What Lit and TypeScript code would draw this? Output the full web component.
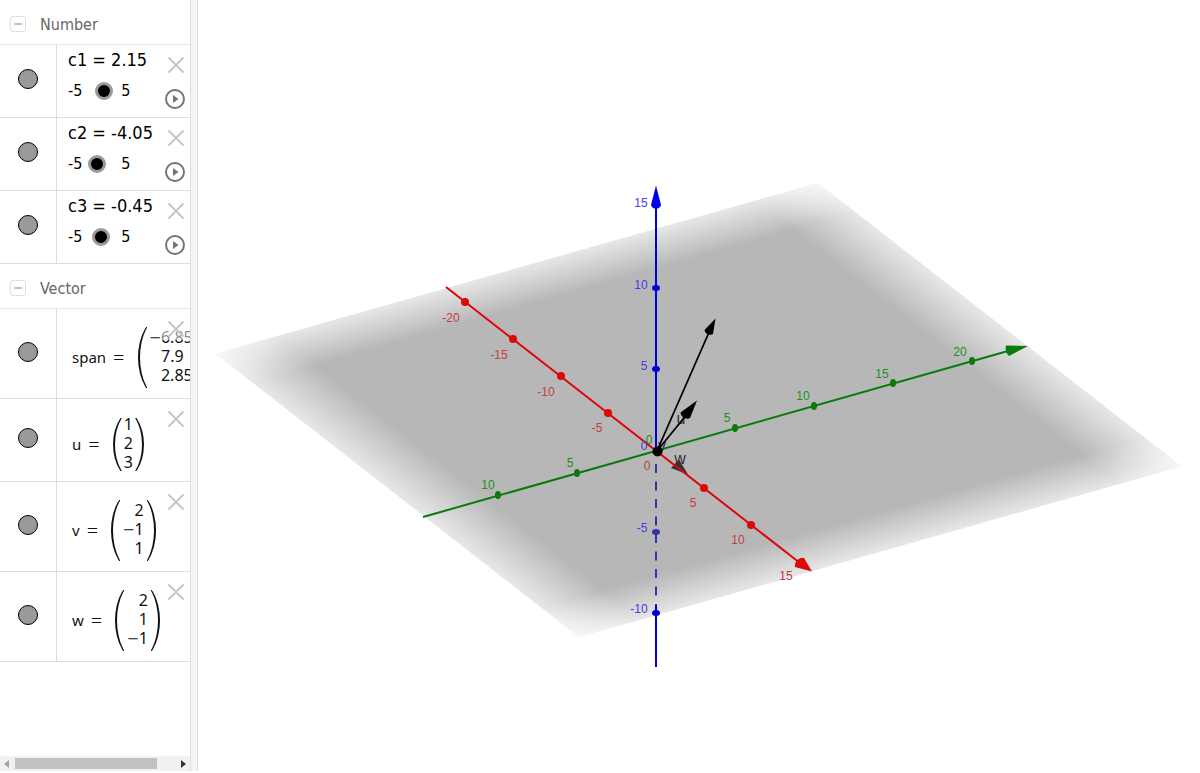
import { LitElement, html, svg, css } from "lit";
import { customElement, property } from "lit/decorators.js";

interface NumberItem { name: string; value: number; }
interface VectorItem { name: string; cells: string[]; size: string; }
interface Tick { x: number; y: number; label: string; lx: number; ly: number; }

const numbers: NumberItem[] = [
  { name: "c1", value: 2.15 },
  { name: "c2", value: -4.05 },
  { name: "c3", value: -0.45 },
];

const vectors: VectorItem[] = [
  { name: "span", cells: ["−6.85", "7.9", "2.85"], size: "tall" },
  { name: "u", cells: ["1", "2", "3"], size: "short" },
  { name: "v", cells: ["2", "−1", "1"], size: "tall" },
  { name: "w", cells: ["2", "1", "−1"], size: "tall" },
];

@customElement("algebra-row")
class AlgebraRow extends LitElement {
  @property() name = "";
  @property({ type: Boolean }) playable = false;

  static styles = css`
    :host { display: flex; position: relative; border-bottom: 1px solid #dcdcdc; }
    button { border: 0; padding: 0; background: none; display: block; cursor: pointer; }
    svg { display: block; }
    .marble { width: 57px; flex: none; display: flex; align-items: center; justify-content: center; border-right: 1px solid #dcdcdc; padding-bottom: 4px; box-sizing: border-box; }
    .dot { width: 20px; height: 20px; box-sizing: border-box; border: 1px solid #000; border-radius: 50%; background: #999; }
    .content { flex: 1; min-width: 0; }
    .tools { position: absolute; right: 0; top: 9px; display: flex; flex-direction: column; gap: 13px; }
    .remove { background: rgba(255, 255, 255, 0.5); padding: 2px 5px 2px 6px; }
    .play { padding-left: 4px; }
  `;

  render() {
    return html`
      <div class="marble"><button class="dot" aria-label="Show or hide ${this.name}"></button></div>
      <div class="content"><slot></slot></div>
      <div class="tools">
        <button class="remove" aria-label="Delete ${this.name}">
          <svg width="18" height="18" viewBox="0 0 18 18"><path d="M1.500 1.500 16.500 16.500M16.500 1.500 1.500 16.500" stroke="#c4c4c4" stroke-width="1.900" /></svg>
        </button>
        ${this.playable ? html`
          <button class="play" aria-label="Play ${this.name}">
            <svg width="20" height="20" viewBox="0 0 20 20"><circle cx="10" cy="10" r="9" fill="#fff" stroke="#757575" stroke-width="2" /><path d="M8 6v8l5.500-4z" fill="#757575" /></svg>
          </button>` : ""}
      </div>`;
  }
}

@customElement("algebra-panel")
class AlgebraPanel extends LitElement {
  static styles = css`
    :host { display: flex; flex-direction: column; width: 190px; flex: none; overflow: hidden; background: #fff; font-family: "DejaVu Sans Condensed", "DejaVu Sans", sans-serif; }
    .list { flex: 1; min-height: 0; overflow: hidden; }
    .head { display: flex; align-items: center; gap: 14px; height: 45px; padding: 4px 0 0 10px; box-sizing: border-box; border-bottom: 1px solid #e6e6e6; margin: 0; font-size: 16px; font-weight: 400; color: #666; }
    .fold { width: 16px; height: 16px; padding: 0; border: 1px solid #e0e0e0; border-radius: 3px; background: #fff; display: flex; align-items: center; justify-content: center; }
    .bar { width: 8px; height: 2px; background: #c4c4c4; }
    .num { height: 72px; padding: 4px 0 0 11px; box-sizing: border-box; color: #000; display: flex; flex-direction: column; gap: 10px; }
    .def { font-size: 18px; line-height: 22px; }
    .slide { display: flex; align-items: center; font-size: 16px; line-height: 20px; }
    .slide label { display: flex; align-items: center; gap: 5px; }
    .range { -webkit-appearance: none; appearance: none; width: 28px; height: 18px; margin: 0 6px 0 0; background: transparent; }
    .range::-webkit-slider-thumb { -webkit-appearance: none; width: 18px; height: 18px; box-sizing: border-box; border: 3px solid #999; border-radius: 50%; background: #000; }
    .vec { display: flex; align-items: center; gap: 7px; padding: 8px 0 0 15px; box-sizing: border-box; font-family: "Noto Sans", sans-serif; font-size: 15px; line-height: 19px; color: #111; }
    .vec.tall { height: 89px; }
    .vec.short { height: 82px; }
    .sign { font-size: 20px; font-weight: 300; line-height: 0; vertical-align: -2px; }
    .eq { font-size: 20px; font-weight: 300; }
    .matrix { display: flex; gap: 3px; margin-left: 6px; flex: none; }
    .paren { position: relative; overflow: hidden; width: 9px; margin: -2px 0; }
    .short .paren { margin: 2px 0; }
    .paren::before { content: ""; position: absolute; top: -10px; bottom: -10px; width: 24px; box-sizing: border-box; }
    .open::before { left: 0; border-left: 2px solid #111; border-radius: 100% 0 0 100% / 50% 0 0 50%; }
    .close::before { right: 0; border-right: 2px solid #111; border-radius: 0 100% 100% 0 / 0 50% 50% 0; }
    .cells { text-align: right; font-size: 16px; margin-top: -1px; margin-bottom: 1px; }
    .short .matrix { gap: 2px; }
    .pad { padding-right: 9px; }
    .scroll { display: flex; align-items: center; justify-content: space-between; height: 15px; background: #f1f1f1; padding: 0 4px; }
    .thumb { flex: 1; margin: 0 24px 0 6px; height: 11px; background: #c1c1c1; }
  `;

  private cell(text: string) {
    const negative = text.startsWith("−");
    return html`<div class=${text === "7.9" ? "pad" : ""}>${negative ? html`<span class="sign">−</span>` : ""}${negative ? text.slice(1) : text}</div>`;
  }

  render() {
    return html`
      <div class="list">
        <h2 class="head"><button class="fold" aria-label="Collapse Number"><span class="bar"></span></button>Number</h2>
        ${numbers.map((n) => html`
          <algebra-row name=${n.name} playable>
            <div class="num">
              <div class="def">${n.name} = ${n.value}</div>
              <div class="slide">
                <label>-5 <input class="range" type="range" min="-5" max="5" step="0.05" .value=${String(n.value)} aria-label=${n.name} /></label>
                <span>5</span>
              </div>
            </div>
          </algebra-row>`)}
        <h2 class="head"><button class="fold" aria-label="Collapse Vector"><span class="bar"></span></button>Vector</h2>
        ${vectors.map((v) => html`
          <algebra-row name=${v.name}>
            <div class="vec ${v.size}">
              <span>${v.name}</span><span class="eq">=</span>
              <div class="matrix">
                <div class="paren open"></div>
                <div class="cells">${v.cells.map((c) => this.cell(c))}</div>
                <div class="paren close"></div>
              </div>
            </div>
          </algebra-row>`)}
      </div>
      <div class="scroll">
        <svg width="5" height="8" viewBox="0 0 5 8"><path d="M5 0v8L0 4z" fill="#a3a3a3" /></svg>
        <div class="thumb"></div>
        <svg width="5" height="8" viewBox="0 0 5 8"><path d="M0 0v8l5-4z" fill="#333" /></svg>
      </div>`;
  }
}

const xTicks: Tick[] = [
  { x: 465, y: 302, label: "-20", lx: 451, ly: 322 },
  { x: 513, y: 339, label: "-15", lx: 499, ly: 359 },
  { x: 561, y: 376, label: "-10", lx: 546, ly: 396 },
  { x: 608, y: 413, label: "-5", lx: 597, ly: 432 },
  { x: 704, y: 488, label: "5", lx: 693, ly: 507 },
  { x: 751, y: 525, label: "10", lx: 738, ly: 544 },
];
const yTicks: Tick[] = [
  { x: 498, y: 495, label: "10", lx: 488, ly: 489 },
  { x: 577, y: 473, label: "5", lx: 570, ly: 467 },
  { x: 735, y: 428, label: "5", lx: 727, ly: 422 },
  { x: 814, y: 406, label: "10", lx: 803, ly: 400 },
  { x: 893, y: 383, label: "15", lx: 882, ly: 378 },
  { x: 972, y: 361, label: "20", lx: 960, ly: 356 },
];
const zTicks: Tick[] = [
  { x: 656, y: 288, label: "10", lx: 641, ly: 289 },
  { x: 656, y: 369, label: "5", lx: 644, ly: 370 },
  { x: 656, y: 532, label: "-5", lx: 642, ly: 532 },
  { x: 656, y: 613, label: "-10", lx: 639, ly: 613 },
];

@customElement("space-view")
class SpaceView extends LitElement {
  static styles = css`
    :host { display: block; flex: 1; min-width: 0; background: #fff; }
    svg { display: block; width: 100%; height: 100%; }
    text { font-family: "Liberation Sans", Arial, sans-serif; font-size: 12px; text-anchor: middle; }
    .x { fill: #c04040; }
    .y { fill: #209020; }
    .z { fill: #4040e0; }
    .name { font-size: 16px; fill: #333; }
  `;

  render() {
    const labels = (ticks: Tick[], cls: string) =>
      ticks.map((t) => svg`<text class=${cls} x=${t.lx} y=${t.ly}>${t.label}</text>`);
    return html`
      <svg viewBox="198 0 1002 771" role="img" aria-label="3D graphics view">
        <defs>
          <linearGradient id="fadeU" x1="0" x2="1" y1="0" y2="0">
            <stop offset="0" stop-color="#fff" stop-opacity="0.33" /><stop offset="0.105" stop-color="#fff" />
            <stop offset="0.895" stop-color="#fff" /><stop offset="1" stop-color="#fff" stop-opacity="0.33" />
          </linearGradient>
          <linearGradient id="fadeV" x1="0" x2="0" y1="0" y2="1">
            <stop offset="0" stop-color="#b7b7b7" stop-opacity="0.33" /><stop offset="0.105" stop-color="#b7b7b7" />
            <stop offset="0.895" stop-color="#b7b7b7" /><stop offset="1" stop-color="#b7b7b7" stop-opacity="0.33" />
          </linearGradient>
          <mask id="sides" maskUnits="userSpaceOnUse" x="0" y="0" width="1000" height="1000" style="mask-type: alpha">
            <rect width="1000" height="1000" fill="url(#fadeU)" />
          </mask>
        </defs>
        <g transform="matrix(0.6035 -0.171 0.3645 0.284 214.500 353.500)">
          <rect width="1000" height="1000" fill="url(#fadeV)" mask="url(#sides)" />
        </g>

        <path d="M656 464V608" stroke="#3333aa" stroke-width="2" stroke-dasharray="9 8.500" />
        <path d="M656 605V667" stroke="#0000cc" stroke-width="2" />
        <path d="M423 517 1008 351" stroke="#0a7a0a" stroke-width="2" />
        <path d="M1028 346 1006 345.500C1005 349 1006 354 1009 356z" fill="#0a7a0a" />
        ${yTicks.map((t) => svg`<ellipse cx=${t.x} cy=${t.y} rx="3" ry="4" fill="#0a7a0a" />`)}

        <path d="M688 474.500 679 459.500 671 468z" fill="#333" />
        <path d="M446 287 800 563" stroke="#dd0808" stroke-width="2" />
        <path d="M812 571.500 804 558C799 557 794 562 795 567z" fill="#dd0808" />
        ${xTicks.map((t) => svg`<circle cx=${t.x} cy=${t.y} r="4" fill="#dd0808" />`)}

        <path d="M656 451V205" stroke="#0000dd" stroke-width="2" />
        <path d="M656 185.500 651 205C652 210 660 210 661 205z" fill="#0000ee" />
        ${zTicks.map((t) => svg`<ellipse cx=${t.x} cy=${t.y} rx="4" ry="3" fill=${t.y === 532 ? "#3333aa" : "#0000dd"} />`)}

        ${labels(xTicks, "x")}${labels(yTicks, "y")}${labels(zTicks, "z")}
        <text class="x" x="786" y="580">15</text>
        <text class="x" x="647" y="470">0</text>
        <text class="y" x="649" y="444">0</text>
        <text class="z" x="644" y="450">0</text>
        <text class="z" x="641" y="207">15</text>
        <text class="name" x="662" y="451">v</text>
        <text class="name" x="680" y="464">w</text>
        <text class="name" x="681" y="424">u</text>

        <path d="M657 451 710 330M657 451 688 413" stroke="#000" stroke-width="1.800" />
        <path d="M715.500 318.500 704.500 330C705 334 710 336 713 334z" fill="#000" />
        <path d="M697 400.500 680.500 412.500C681 417 686 420 690 418z" fill="#000" />
        <circle cx="657.500" cy="451.500" r="5" fill="#000" />
      </svg>`;
  }
}

@customElement("app-root")
class AppRoot extends LitElement {
  static styles = css`
    :host { display: block; height: 100vh; box-sizing: border-box; padding-bottom: 2px; background: #fff; }
    .layout { display: flex; height: 100%; }
    .divider { width: 8px; flex: none; box-sizing: border-box; background: #f5f5f5; border: solid #dcdcdc; border-width: 0 1px; }
  `;

  render() {
    return html`
      <div class="layout">
        <algebra-panel></algebra-panel>
        <div class="divider"></div>
        <space-view></space-view>
      </div>`;
  }
}
